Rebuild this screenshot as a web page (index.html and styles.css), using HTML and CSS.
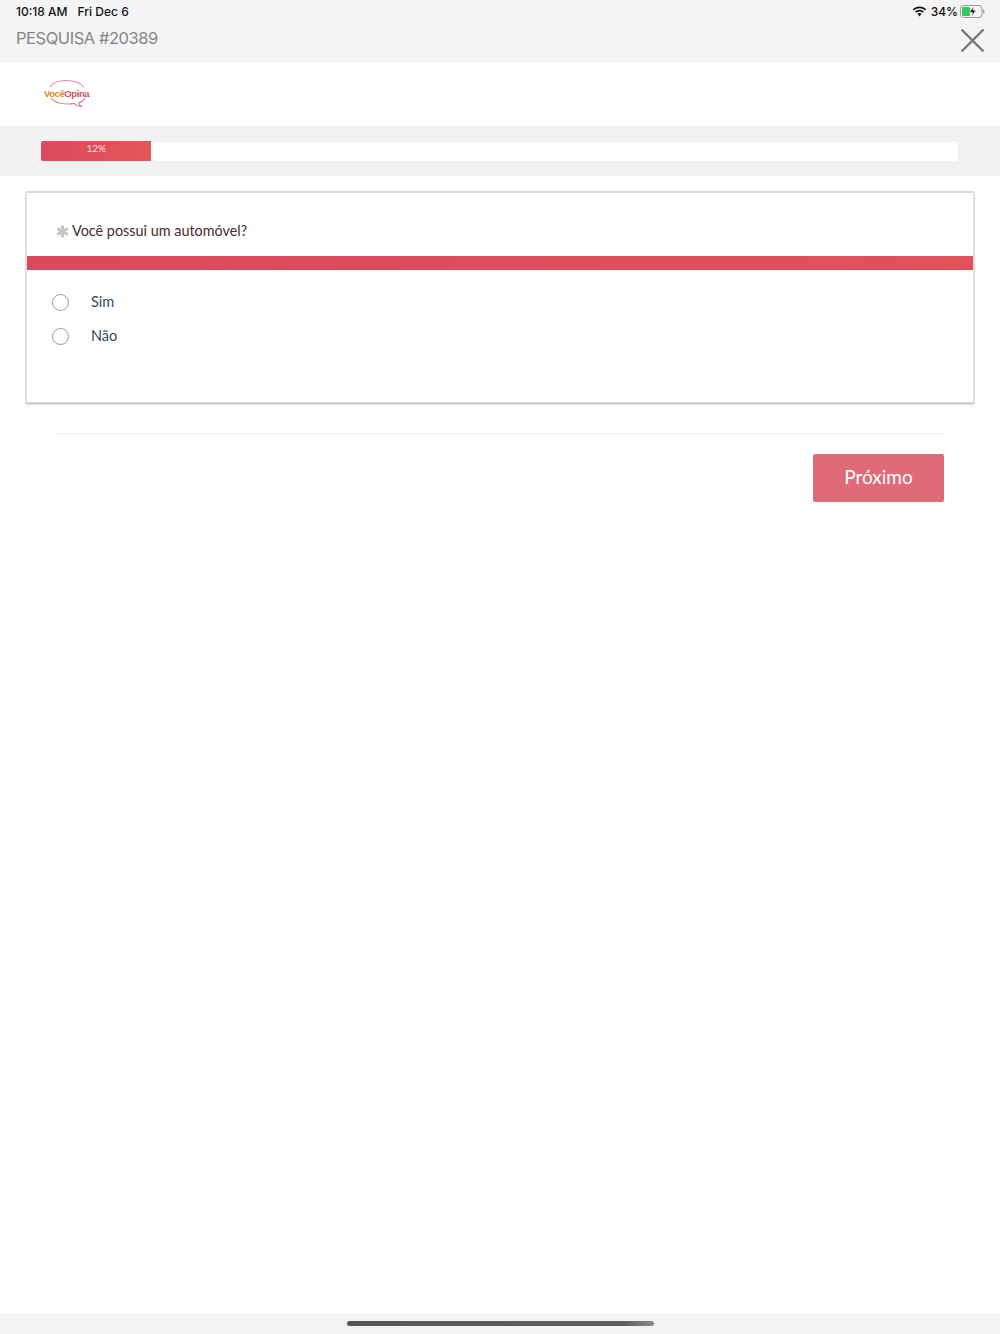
FILE: index.html
```html
<!DOCTYPE html>
<html lang="pt">
<head>
<meta charset="utf-8">
<title>Pesquisa #20389</title>
<link rel="stylesheet" href="styles.css">
</head>
<body>
<div class="page">
  <header class="topbar">
    <div class="status">
      <div class="status-left"><span>10:18 AM</span><span>Fri Dec 6</span></div>
      <div class="status-right">
        <svg class="wifi" width="15" height="11" viewBox="0 0 15 11"><path d="M7.500 2.200c2.100 0 4 .8 5.500 2.200l1.100-1.200C12.300 1.500 10 .5 7.500 .5S2.700 1.500.9 3.200L2 4.400C3.500 3 5.400 2.200 7.500 2.200z" fill="#111"/><path d="M7.500 5.400c1.200 0 2.300.5 3.200 1.300l1.100-1.200C10.600 4.400 9.100 3.700 7.500 3.700s-3.100.7-4.300 1.800l1.100 1.200c.9-.8 2-1.300 3.200-1.300z" fill="#111"/><path d="M7.500 7c-.8 0-1.500.3-2 .8l2 2.700 2-2.700c-.5-.5-1.200-.8-2-.8z" fill="#111"/></svg>
        <span>34%</span>
        <svg class="battery" width="25" height="13" viewBox="0 0 25 13"><rect x=".5" y=".5" width="21.500" height="12" rx="3" fill="none" stroke="#9a9a9a"/><rect x="2" y="2" width="8" height="9" rx="1" fill="#34c759"/><path d="M23 4.500c1 .3 1.500 1 1.500 2s-.5 1.700-1.500 2z" fill="#9a9a9a"/><path d="M13.500 1.500L9.500 7.500h3l-1 4 4.500-6.300h-3z" fill="#111" stroke="#f3f4f6" stroke-width=".6"/></svg>
      </div>
    </div>
    <div class="titlebar">
      <h1 class="survey-title">PESQUISA #20389</h1>
      <svg class="close" width="25" height="25" viewBox="0 0 25 25"><path d="M1.500 1.500l22 22M23.500 1.500l-22 22" stroke="#777" stroke-width="2.400" fill="none"/></svg>
    </div>
  </header>

  <section class="brand">
    <div class="logo">
      <svg class="logo-bubble" width="46" height="29" viewBox="0 0 46 29"><path d="M6 8C9 3.500 15 1.500 22 1.500c8 0 15 2.500 18 7" fill="none" stroke="#dc8f9a" stroke-width="1.100"/><path d="M7 19c3 4 9 6 17 6 2 0 4-.2 6-.6 2 2 5 3.200 7.500 3-1.500-.8-2.500-2-2.800-3.500 3-1.200 5.300-3 6.300-5" fill="none" stroke="#d97f8d" stroke-width="1.100"/></svg>
      <span class="logo-text"><span class="logo-voce">Você</span><span class="logo-opina">Opina</span></span>
    </div>
  </section>

  <section class="progress-band">
    <div class="progress-track">
      <div class="progress-fill" style="width:12.050%">12%</div>
    </div>
  </section>

  <main class="content">
    <article class="card">
      <div class="question">
        <svg class="required" width="13" height="13" viewBox="0 0 13 13"><path d="M6.500 .5v12M1.300 3.500l10.400 6M11.700 3.500l-10.400 6" stroke="#c6c6c6" stroke-width="3" fill="none"/></svg>
        <span>Você possui um automóvel?</span>
      </div>
      <div class="accent"></div>
      <div class="options">
        <label class="option"><span class="radio"></span><span class="option-label">Sim</span></label>
        <label class="option"><span class="radio"></span><span class="option-label">Não</span></label>
      </div>
    </article>
    <div class="actions">
      <button class="next" type="button">Próximo</button>
    </div>
  </main>

  <footer class="homebar"><div class="handle"></div></footer>
</div>
</body>
</html>
```

FILE: styles.css
```css
* { box-sizing: border-box; }
html, body { margin: 0; padding: 0; background: #fff; }
.page {
  width: 1000px;
  height: 1334px;
  display: flex;
  flex-direction: column;
  font-family: Lato, "Liberation Sans", sans-serif;
  overflow: hidden;
}
.topbar {
  height: 62px;
  background: #f3f4f6;
  display: flex;
  flex-direction: column;
  flex: none;
}
.status {
  height: 23px;
  padding: 0 15px 0 16px;
  display: flex;
  justify-content: space-between;
  align-items: center;
  font-family: Inter, "Liberation Sans", sans-serif;
  font-size: 12px;
  font-weight: 500;
  color: #111;
}
.status-left { display: flex; gap: 10px; }
.status-right { display: flex; align-items: center; gap: 4px; }
.battery { margin-left: -2px; }
.titlebar {
  display: flex;
  justify-content: space-between;
  align-items: flex-start;
  padding: 0 15px 0 16px;
}
.survey-title {
  margin: 4px 0 0;
  font-family: Inter, "Liberation Sans", sans-serif;
  font-size: 16.500px;
  line-height: 22px;
  font-weight: 400;
  letter-spacing: -0.450px;
  color: #858585;
}
.close { margin-top: 5px; }
.brand {
  height: 64px;
  flex: none;
  padding: 17px 0 0 44px;
}
.logo { position: relative; width: 46px; height: 29px; }
.logo-bubble { position: absolute; left: 0; top: 0; }
.logo-text {
  position: absolute;
  left: 0;
  top: 8px;
  font-family: "Liberation Sans", sans-serif;
  font-weight: 700;
  font-size: 9.500px;
  line-height: 13px;
  letter-spacing: -0.420px;
  white-space: nowrap;
}
.logo-voce { color: #d98a1e; }
.logo-opina { color: #d2525f; }
.progress-band {
  height: 50px;
  flex: none;
  background: #f1f1f1;
  padding: 15px 42px 0 41px;
}
.progress-track {
  height: 20px;
  background: #fff;
  border-radius: 2px;
  box-shadow: inset 0 1px 1px rgba(0, 0, 0, .06);
}
.progress-fill {
  height: 100%;
  background: linear-gradient(90deg, #db4a5e, #e45558);
  color: #f8dfe2;
  font-size: 10px;
  line-height: 15px;
  text-align: center;
  border-radius: 2px 0 0 2px;
}
.content { flex: 1; padding: 15px 26px 0; }
.card {
  height: 212px;
  background: #fff;
  border: 1px solid #dcdcdc;
  border-top-width: 2px;
  box-shadow: 0 1px 2px rgba(0, 0, 0, .35);
}
.question {
  height: 63px;
  padding: 27px 0 0 29px;
  display: flex;
  align-items: flex-start;
  gap: 3px;
  font-size: 14.400px;
  line-height: 22px;
  color: #4a2a30;
}
.required { flex: none; margin-top: 5px; }
.accent { height: 14px; background: linear-gradient(90deg, #d94a5e, #e2515a); }
.options { padding: 21px 0 0 25px; display: flex; flex-direction: column; gap: 12px; }
.option {
  height: 22px;
  display: flex;
  align-items: center;
  gap: 22px;
  font-size: 14.500px;
  color: #34495e;
}
.option-label { padding-bottom: 2px; }
.radio {
  width: 17px;
  height: 17px;
  border: 1px solid #9a9a9a;
  border-radius: 50%;
  background: #fff;
  flex: none;
}
.actions {
  margin: 30px 30px 0;
  border-top: 1px solid #eeeeee;
  padding-top: 20px;
  display: flex;
  justify-content: flex-end;
}
.next {
  width: 131px;
  height: 48px;
  border: 0;
  border-radius: 2px;
  background: #e06b78;
  color: #fff;
  font-family: Lato, "Liberation Sans", sans-serif;
  font-size: 19px;
  padding: 0 0 3px;
}
.homebar {
  height: 20px;
  flex: none;
  background: #f3f4f6;
  display: flex;
  justify-content: center;
  padding-top: 7px;
}
.handle {
  width: 307px;
  height: 5px;
  border-radius: 3px;
  background: linear-gradient(90deg, #555 0, #5e5e5e 90%, #8a8a8a 100%);
}
```
